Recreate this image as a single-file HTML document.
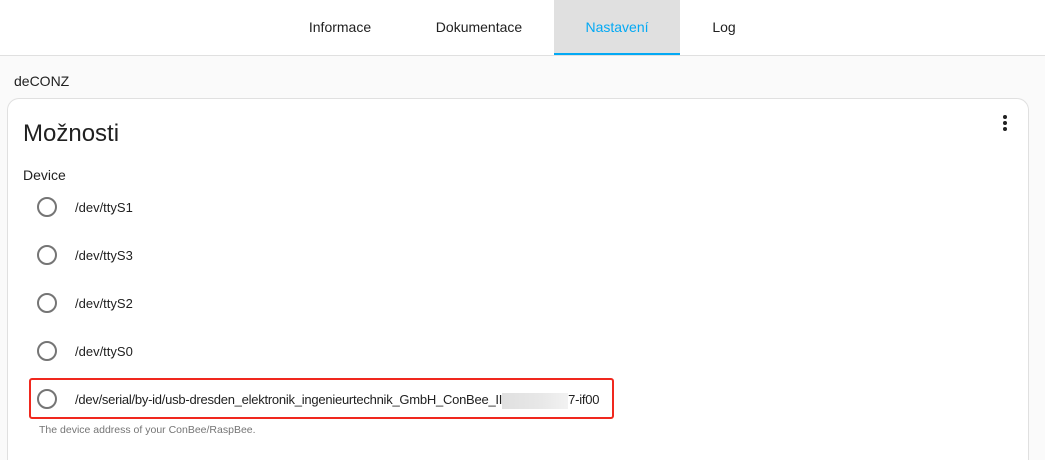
<!DOCTYPE html>
<html><head><meta charset="utf-8"><style>
*{margin:0;padding:0;box-sizing:border-box}
html,body{width:1045px;height:460px;overflow:hidden}
body{background:#fafafa;font-family:"Liberation Sans",sans-serif;color:#212121;position:relative}
.hdr{position:absolute;left:0;top:0;width:1045px;height:56px;background:#fff;border-bottom:1px solid #e0e0e0}
.tab{position:absolute;top:0;height:55px;line-height:55px;font-size:14px;text-align:center}
.act{background:#e0e0e0;color:#03a9f4;border-bottom:2px solid #03a9f4}
.t{position:absolute;white-space:nowrap}
.card{position:absolute;left:7px;top:98px;width:1022px;height:362px;background:#fff;border:1px solid #e0e0e0;border-bottom:none;border-radius:12px 12px 0 0}
.r{position:absolute;left:37px;width:20px;height:20px;border:2px solid #757575;border-radius:50%}
.lbl{position:absolute;left:75px;font-size:13px;color:#212121;white-space:nowrap}
.dot{position:absolute;left:1003px;width:4px;height:4px;border-radius:50%;background:#212121}
</style></head><body>
<div class="hdr">
<div class="tab" style="left:300px;width:80px">Informace</div>
<div class="tab" style="left:428px;width:102px">Dokumentace</div>
<div class="tab act" style="left:554px;width:126px">Nastavení</div>
<div class="tab" style="left:700px;width:48px">Log</div>
</div>
<div class="t" style="left:14px;top:73px;font-size:14px">deCONZ</div>
<div class="card"></div>
<div class="dot" style="top:115px"></div><div class="dot" style="top:121px"></div><div class="dot" style="top:127px"></div>
<div class="t" style="left:23px;top:120px;font-size:24px">Možnosti</div>
<div class="t" style="left:23px;top:167px;font-size:14px">Device</div>
<div class="r" style="top:197px"></div><div class="lbl" style="top:200px">/dev/ttyS1</div>
<div class="r" style="top:245px"></div><div class="lbl" style="top:248px">/dev/ttyS3</div>
<div class="r" style="top:293px"></div><div class="lbl" style="top:296px">/dev/ttyS2</div>
<div class="r" style="top:341px"></div><div class="lbl" style="top:344px">/dev/ttyS0</div>
<div class="r" style="top:389px"></div><div class="lbl" style="top:392px;letter-spacing:-0.25px">/dev/serial/by-id/usb-dresden_elektronik_ingenieurtechnik_GmbH_ConBee_II<span style="display:inline-block;width:66px;height:16px;background:linear-gradient(90deg,#e0e0e0,#e8e8e8 60%,#f2f2f2);vertical-align:middle"></span>7-if00</div>
<div style="position:absolute;left:29px;top:378px;width:585px;height:41px;border:2px solid #f0281e;border-radius:3px"></div>
<div class="t" style="left:39px;top:424px;font-size:10.5px;color:#757575">The device address of your ConBee/RaspBee.</div>
</body></html>
